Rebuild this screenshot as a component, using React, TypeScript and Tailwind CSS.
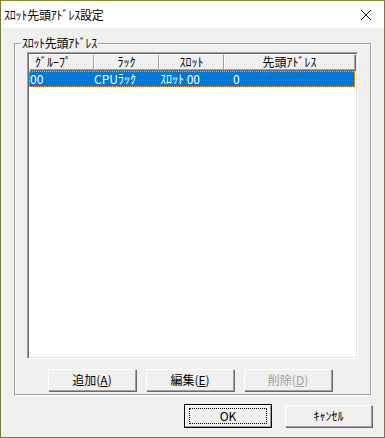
import React from "react";

const font = { fontFamily: '"Noto Sans CJK JP", "Liberation Sans", sans-serif' };

function Btn({ label, mnemonic, disabled, focus, className }: { label: string; mnemonic?: string; disabled?: boolean; focus?: boolean; className?: string }) {
  return (
    <div className={`h-[22px] bg-[#f0f0f0] border-t border-l border-t-white border-l-white border-r border-b border-r-[#a0a0a0] border-b-[#a0a0a0] shadow-[1px_1px_0_#696969] flex items-center justify-center text-[12px] ${disabled ? "text-[#a0a0a0]" : "text-black"} ${focus ? "outline outline-1 outline-black" : ""} ${className ?? ""}`}>
      {focus ? (
        <div className="w-[calc(100%-6px)] h-[16px] border border-dotted border-black flex items-center justify-center leading-none">{label}</div>
      ) : (
        <span className="leading-none">
          {label}
          {mnemonic !== undefined && (
            <>
              (<span className="underline">{mnemonic}</span>)
            </>
          )}
        </span>
      )}
    </div>
  );
}

export default function App() {
  return (
    <div className="w-[385px] h-[438px] bg-[#f0f0f0] flex flex-col border border-[#7a7a3a] border-t-[#8b8b2e]" style={font}>
      <div className="h-[27px] bg-white flex items-center justify-between pl-[3px] pr-[12px] shrink-0">
        <span className="text-[12px] text-black leading-none tracking-[-0.2px]">ｽﾛｯﾄ先頭ｱﾄﾞﾚｽ設定</span>
        <svg width="12" height="12" viewBox="0 0 12 12">
          <path d="M1 1 L11 11 M11 1 L1 11" stroke="#000" strokeWidth="1" />
        </svg>
      </div>
      <div className="flex-1 flex flex-col px-[12px] pt-[15px]">
        <div className="relative h-[352px] border border-[#a0a0a0] shadow-[inset_1px_1px_0_#fff,1px_1px_0_#fff] mx-[1px]">
          <div className="absolute left-[6px] -top-[9px] px-[1px] bg-[#f0f0f0] text-[12px] leading-[16px] text-black tracking-[-0.3px]">ｽﾛｯﾄ先頭ｱﾄﾞﾚｽ</div>
          <div className="flex flex-col pt-[8px] px-[12px]">
            <div className="h-[307px] bg-white border border-t-[#a0a0a0] border-l-[#a0a0a0] border-r-white border-b-white shadow-[inset_1px_1px_0_#696969,inset_-1px_-1px_0_#e3e3e3] p-[1px] flex flex-col">
              <div className="flex h-[16px] text-[12px] leading-none">
                {[
                  ["ｸﾞﾙｰﾌﾟ", "w-[65px] justify-start pl-[5px]"],
                  ["ﾗｯｸ", "w-[65px] justify-center"],
                  ["ｽﾛｯﾄ", "w-[65px] justify-center"],
                  ["先頭ｱﾄﾞﾚｽ", "w-[131px] justify-center"],
                ].map(([t, c]) => (
                  <div key={t} className={`${c} h-full flex items-center bg-[#f0f0f0] border-t border-l border-t-white border-l-white border-r border-b border-r-[#a0a0a0] border-b-[#a0a0a0] shadow-[1px_1px_0_#696969]`}>
                    {t}
                  </div>
                ))}
              </div>
              <div className="mt-[1px] h-[16px] bg-[#0078d7] text-white text-[12px] leading-none flex items-center outline outline-1 outline-dotted outline-[#f3a23c] -outline-offset-1 mr-[1px]">
                <span className="w-[64px] pl-[1px]">00</span>
                <span className="w-[65px] pl-[1px]">CPUﾗｯｸ</span>
                <span className="w-[65px] pl-[2px]">ｽﾛｯﾄ 00</span>
                <span className="pl-[10px]">0</span>
              </div>
            </div>
            <div className="flex pl-[21px] gap-[10px] mt-[10px]">
              <Btn label="追加" mnemonic="A" className="w-[88px]" />
              <Btn label="編集" mnemonic="E" className="w-[88px]" />
              <Btn label="削除" mnemonic="D" disabled className="w-[88px]" />
            </div>
          </div>
        </div>
        <div className="flex justify-end gap-[14px] mt-[10px] pr-[0px]">
          <Btn label="OK" focus className="w-[86px]" />
          <Btn label="ｷｬﾝｾﾙ" className="w-[87px]" />
        </div>
      </div>
    </div>
  );
}
